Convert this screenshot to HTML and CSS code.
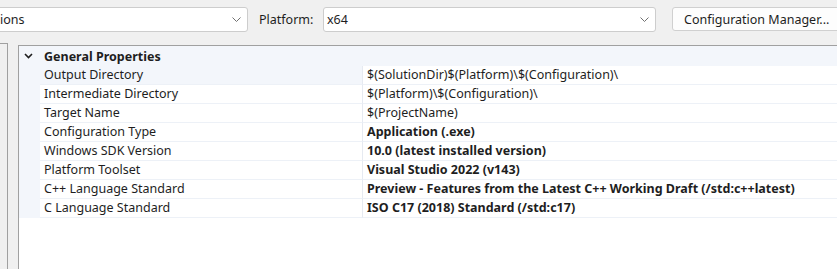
FILE: index.html
```html
<!DOCTYPE html>
<html lang="en">
<head>
	<meta charset="UTF-8">
	<title>Property Pages</title>
	<link rel="stylesheet" href="styles.css">
</head>
<body>

	<div class="toolbar">
		<div class="combo combo-config">
			<span class="combo-text">ions</span>
			<svg class="chev" width="9" height="5" viewBox="0 0 9 5"><polyline points="0.5,0.5 4.5,4.5 8.5,0.5" fill="none" stroke="#707070" stroke-width="1"/></svg>
		</div>
		<label class="label">Platform:</label>
		<div class="combo combo-platform">
			<span class="combo-text">x64</span>
			<svg class="chev" width="9" height="5" viewBox="0 0 9 5"><polyline points="0.5,0.5 4.5,4.5 8.5,0.5" fill="none" stroke="#707070" stroke-width="1"/></svg>
		</div>
		<button class="btn">Configuration Manager...</button>
	</div>

	<div class="main">
		<div class="side"></div>
		<div class="grid">
			<div class="group">
				<svg class="group-chev" width="9" height="6" viewBox="0 0 9 6"><polyline points="1,1 4.5,4.5 8,1" fill="none" stroke="#1e1e1e" stroke-width="1.6"/></svg>
				<span>General Properties</span>
			</div>
			<div class="row selected">
				<div class="gutter"></div>
				<div class="name">Output Directory</div>
				<div class="value">$(SolutionDir)$(Platform)\$(Configuration)\</div>
			</div>
			<div class="row">
				<div class="gutter"></div>
				<div class="name">Intermediate Directory</div>
				<div class="value">$(Platform)\$(Configuration)\</div>
			</div>
			<div class="row">
				<div class="gutter"></div>
				<div class="name">Target Name</div>
				<div class="value">$(ProjectName)</div>
			</div>
			<div class="row">
				<div class="gutter"></div>
				<div class="name">Configuration Type</div>
				<div class="value bold">Application (.exe)</div>
			</div>
			<div class="row">
				<div class="gutter"></div>
				<div class="name">Windows SDK Version</div>
				<div class="value bold">10.0 (latest installed version)</div>
			</div>
			<div class="row">
				<div class="gutter"></div>
				<div class="name">Platform Toolset</div>
				<div class="value bold">Visual Studio 2022 (v143)</div>
			</div>
			<div class="row">
				<div class="gutter"></div>
				<div class="name">C++ Language Standard</div>
				<div class="value bold">Preview - Features from the Latest C++ Working Draft (/std:c++latest)</div>
			</div>
			<div class="row">
				<div class="gutter"></div>
				<div class="name">C Language Standard</div>
				<div class="value bold">ISO C17 (2018) Standard (/std:c17)</div>
			</div>
		</div>
	</div>

</body>
</html>
```

FILE: styles.css
```css
* {
	box-sizing: border-box;
}
body {
	margin: 0;
	background: #f0f0f0;
	font-family: "Noto Sans", "Open Sans", sans-serif;
	font-size: 12.5px;
	color: #1e1e1e;
	height: 269px;
	overflow: hidden;
}
.toolbar {
	display: flex;
	align-items: center;
	height: 43px;
	padding-bottom: 5px;
}
.toolbar > * {
	flex-shrink: 0;
}
.combo {
	display: flex;
	align-items: center;
	justify-content: space-between;
	height: 25px;
	background: #fff;
	border: 1px solid #cdcdcd;
	border-radius: 3px;
	padding: 0 6px 0 3px;
}
.combo-config {
	width: 252px;
	margin-left: -4px;
}
.combo-platform {
	width: 333px;
}
.chev {
	display: block;
}
.label {
	margin: 0 7px 0 11px;
	width: 57px;
}
.btn {
	margin-left: 16px;
	height: 24px;
	width: 180px;
	text-align: left;
	padding: 0 11px;
	background: #fdfdfd;
	border: 1px solid #d0d0d0;
	border-radius: 3px;
	font-family: inherit;
	font-size: 12.5px;
	color: #1e1e1e;
}
.main {
	display: flex;
	height: 226px;
}
.side {
	width: 8px;
	border-top: 1px solid #a0a0a0;
	border-right: 1px solid #a0a0a0;
}
.grid {
	flex: 1;
	margin-left: 10px;
	margin-top: 2px;
	background: #fff;
	border-top: 1px solid #a0a0a0;
	border-left: 1px solid #a0a0a0;
}
.group {
	display: flex;
	align-items: center;
	height: 20px;
	background: #f3f6fb;
	font-weight: bold;
	padding-left: 5px;
}
.group-chev {
	margin-right: 11px;
}
.row {
	display: flex;
	height: 19px;
	line-height: 18px;
}
.gutter {
	width: 21px;
	background: #f3f6fb;
}
.name {
	width: 322px;
	padding-left: 4px;
	border-bottom: 1px solid #edf1f7;
}
.value {
	flex: 1;
	padding-left: 4px;
	border-left: 1px solid #e6eaf1;
	border-bottom: 1px solid #edf1f7;
	white-space: nowrap;
}
.row.selected .name {
	background: #f3f6fb;
}
.bold {
	font-weight: bold;
}
```
